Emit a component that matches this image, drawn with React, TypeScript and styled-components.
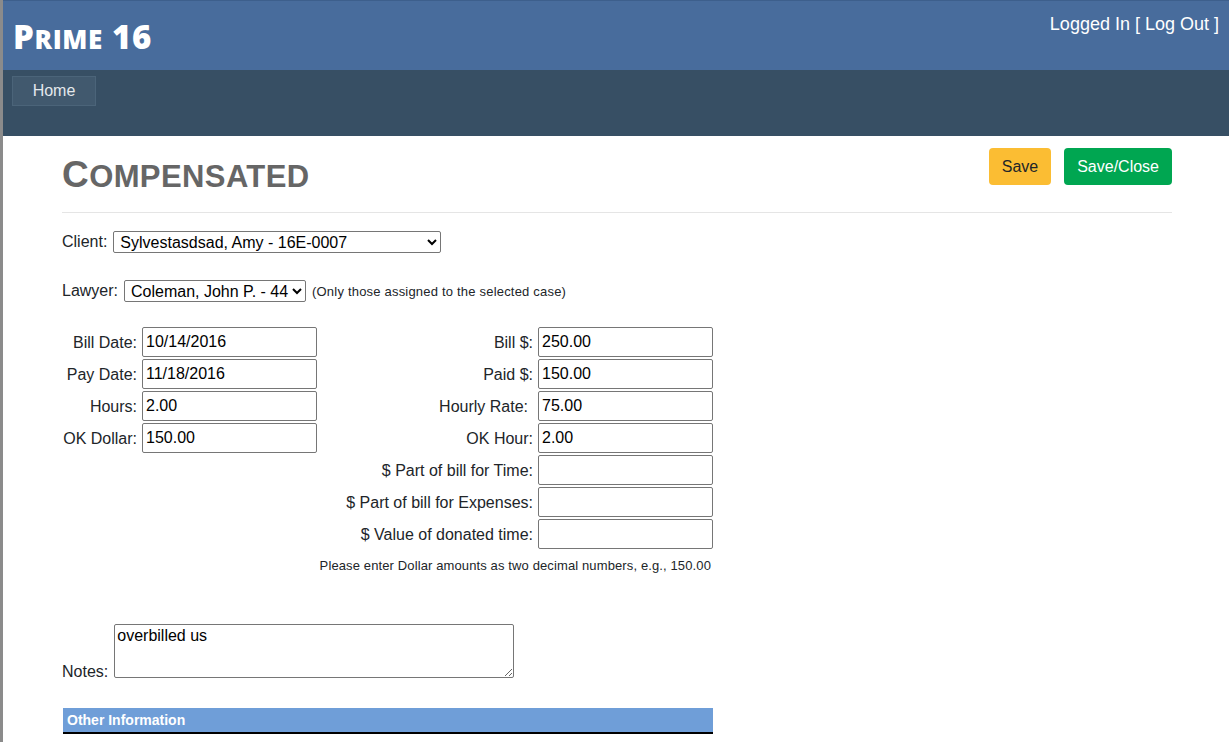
import React from "react";
import styled, { createGlobalStyle } from "styled-components";

const Global = createGlobalStyle`
  html, body { margin: 0; padding: 0; background: #fff; }
  body { font-family: "Liberation Sans", Arial, sans-serif; font-size: 16px; color: #212529; }
`;

const Page = styled.div`
  border-left: 3px solid #8b8b8b;
  min-height: 742px;
  box-sizing: border-box;
`;

const TopBar = styled.header`
  height: 70px;
  background: #486c9c;
  border-top: 1px solid #3d5f8c;
  box-sizing: border-box;
  display: flex;
  justify-content: space-between;
  align-items: flex-start;
  padding: 0 10px 0 10px;
`;

const Brand = styled.div`
  color: #fff;
  font-family: "Open Sans", "Liberation Sans", sans-serif;
  font-weight: 800;
  margin-top: 16px;
  line-height: 40px;
  letter-spacing: 0.6px;
`;

const BigCap = styled.span<{ $size: number }>`
  font-size: ${(p) => p.$size}px;
`;

const SmallCaps = styled.span<{ $size: number }>`
  font-size: ${(p) => p.$size}px;
  text-transform: uppercase;
`;

const UserLinks = styled.div`
  color: #fff;
  font-size: 18px;
  margin-top: 13px;
`;

const NavBar = styled.nav`
  height: 66px;
  background: #374f64;
  padding: 6px 9px;
  box-sizing: border-box;
  display: flex;
  align-items: flex-start;
`;

const NavItem = styled.div`
  width: 84px;
  height: 30px;
  box-sizing: border-box;
  background: #41596e;
  border: 1px solid #4b6479;
  color: #e4e8ec;
  font-size: 16px;
  display: flex;
  align-items: center;
  justify-content: center;
`;

const Container = styled.main`
  width: 1110px;
  margin-left: 59px;
`;

const TitleRow = styled.div`
  display: flex;
  justify-content: space-between;
  align-items: flex-start;
  padding-top: 12px;
`;

const Title = styled.h1`
  margin: 5px 0 0 0;
  color: #666;
  font-weight: 700;
  line-height: 43px;
  letter-spacing: 0.4px;
`;

const Buttons = styled.div`
  display: flex;
  gap: 13px;
`;

const Btn = styled.button<{ $variant: "warn" | "ok" }>`
  font-family: "Liberation Sans", Arial, sans-serif;
  font-size: 16px;
  line-height: 24px;
  padding: 6px 12px;
  border: 1px solid transparent;
  border-radius: 4px;
  height: 37px;
  background: ${(p) => (p.$variant === "warn" ? "#fbbd33" : "#00a651")};
  color: ${(p) => (p.$variant === "warn" ? "#212529" : "#fff")};
`;

const Rule = styled.hr`
  margin: 14px 0 0 0;
  border: 0;
  border-top: 1px solid #e5e5e5;
`;

const FieldLine = styled.div<{ $top: number }>`
  margin-top: ${(p) => p.$top}px;
  display: flex;
  align-items: center;
  gap: 6px;
  font-size: 16px;
  color: #212529;
`;

const Select = styled.select<{ $w: number }>`
  width: ${(p) => p.$w}px;
  height: 22px;
  font-family: "Liberation Sans", Arial, sans-serif;
  font-size: 16px;
  color: #000;
  border: 1px solid #767676;
  border-radius: 2px;
  background: #fff;
  padding: 0 0 0 2px;
`;

const Hint = styled.span`
  font-size: 13px;
  letter-spacing: 0.2px;
  color: #212529;
`;

const Grid = styled.div`
  margin-top: 25px;
  display: grid;
  grid-template-columns: 78px 178px 218px 178px;
  grid-auto-rows: 32px;
  width: 652px;
`;

const Label = styled.div<{ $pad?: number }>`
  display: flex;
  align-items: center;
  justify-content: flex-end;
  padding-right: ${(p) => p.$pad ?? 3}px;
  font-size: 16px;
  color: #212529;
  white-space: nowrap;
`;

const InputCell = styled.div`
  display: flex;
  align-items: flex-start;
  padding-left: 2px;
`;

const Input = styled.input`
  width: 175px;
  height: 30px;
  box-sizing: border-box;
  font-family: "Liberation Sans", Arial, sans-serif;
  font-size: 16px;
  color: #000;
  border: 1px solid #767676;
  border-radius: 2px;
  padding: 1px 3px;
`;

const Empty = styled.div``;

const Note = styled.div`
  grid-column: 1 / 5;
  text-align: right;
  padding-right: 3px;
  font-size: 13px;
  letter-spacing: 0.12px;
  line-height: 30px;
  color: #212529;
`;

const NotesRow = styled.div`
  margin-top: 41px;
  display: flex;
  align-items: flex-end;
  gap: 6px;
  font-size: 16px;
  color: #212529;
`;

const NotesLabel = styled.span`
  line-height: 16px;
  margin-bottom: -2px;
`;

const TextArea = styled.textarea`
  width: 400px;
  height: 54px;
  box-sizing: border-box;
  font-family: "Liberation Sans", Arial, sans-serif;
  font-size: 16px;
  color: #000;
  border: 1px solid #767676;
  border-radius: 2px;
  padding: 2px 2px;
  resize: both;
`;

const SectionBar = styled.div`
  margin-top: 30px;
  margin-left: 1px;
  width: 650px;
  height: 26px;
  box-sizing: border-box;
  background: #6f9ed8;
  border-bottom: 2px solid #000;
  color: #fff;
  font-weight: 700;
  font-size: 14px;
  line-height: 24px;
  padding-left: 4px;
`;

type Row = { l?: string; lv?: string; r: string; rv: string; rpad?: number };

const rows: Row[] = [
  { l: "Bill Date:", lv: "10/14/2016", r: "Bill $:", rv: "250.00" },
  { l: "Pay Date:", lv: "11/18/2016", r: "Paid $:", rv: "150.00" },
  { l: "Hours:", lv: "2.00", r: "Hourly Rate:", rv: "75.00", rpad: 8 },
  { l: "OK Dollar:", lv: "150.00", r: "OK Hour:", rv: "2.00" },
  { r: "$ Part of bill for Time:", rv: "" },
  { r: "$ Part of bill for Expenses:", rv: "" },
  { r: "$ Value of donated time:", rv: "" },
];

export default function App() {
  return (
    <Page>
      <Global />
      <TopBar>
        <Brand>
          <BigCap $size={33}>P</BigCap>
          <SmallCaps $size={26}>rime</SmallCaps>
          <BigCap $size={33}> 16</BigCap>
        </Brand>
        <UserLinks>Logged In [ Log Out ]</UserLinks>
      </TopBar>
      <NavBar>
        <NavItem>Home</NavItem>
      </NavBar>
      <Container>
        <TitleRow>
          <Title>
            <BigCap $size={37}>C</BigCap>
            <SmallCaps $size={31}>ompensated</SmallCaps>
          </Title>
          <Buttons>
            <Btn $variant="warn">Save</Btn>
            <Btn $variant="ok">Save/Close</Btn>
          </Buttons>
        </TitleRow>
        <Rule />
        <FieldLine $top={18}>
          <span>Client:</span>
          <Select $w={328} defaultValue="a">
            <option value="a">Sylvestasdsad, Amy - 16E-0007</option>
          </Select>
        </FieldLine>
        <FieldLine $top={27}>
          <span>Lawyer:</span>
          <Select $w={182} defaultValue="a">
            <option value="a">Coleman, John P. - 44</option>
          </Select>
          <Hint>(Only those assigned to the selected case)</Hint>
        </FieldLine>
        <Grid>
          {rows.map((r, i) => (
            <React.Fragment key={i}>
              {r.l ? <Label>{r.l}</Label> : <Empty />}
              {r.l ? (
                <InputCell>
                  <Input defaultValue={r.lv} />
                </InputCell>
              ) : (
                <Empty />
              )}
              <Label $pad={r.rpad}>{r.r}</Label>
              <InputCell>
                <Input defaultValue={r.rv} />
              </InputCell>
            </React.Fragment>
          ))}
          <Note>Please enter Dollar amounts as two decimal numbers, e.g., 150.00</Note>
        </Grid>
        <NotesRow>
          <NotesLabel>Notes:</NotesLabel>
          <TextArea defaultValue="overbilled us" />
        </NotesRow>
        <SectionBar>Other Information</SectionBar>
      </Container>
    </Page>
  );
}
